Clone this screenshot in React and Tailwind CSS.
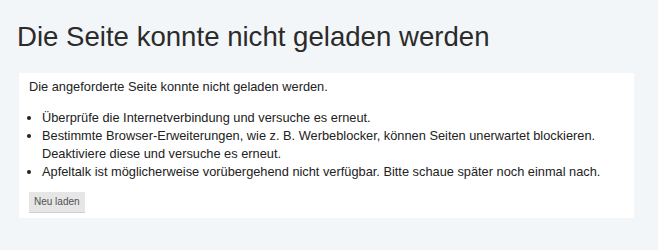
import React from 'react';

const tips = [
  'Überprüfe die Internetverbindung und versuche es erneut.',
  'Bestimmte Browser-Erweiterungen, wie z. B. Werbeblocker, können Seiten unerwartet blockieren. Deaktiviere diese und versuche es erneut.',
  'Apfeltalk ist möglicherweise vorübergehend nicht verfügbar. Bitte schaue später noch einmal nach.',
];

const App = () => {
  return (
    <div className="min-h-[250px] bg-[#f3f6f8] px-[19px] pt-[19px] pb-8 font-['Liberation_Sans',Arial,sans-serif] text-[#222]">
      <h1 className="-ml-[2px] text-[27.6px] leading-[36px] font-normal text-[#2b2b2b]">
        Die Seite konnte nicht geladen werden
      </h1>
      <div className="mt-[18px] w-[615px] bg-white px-[10px] pt-[5px] pb-[5px] text-[12.8px] leading-[18px]">
        <p>Die angeforderte Seite konnte nicht geladen werden.</p>
        <ul className="mt-[13px] list-disc pl-[13px]">
          {tips.map((tip) => (
            <li key={tip}>{tip}</li>
          ))}
        </ul>
        <button className="mt-[11px] block h-[21px] border-b border-[#cfcfcf] bg-[#e6e6e6] px-[5px] text-[10px] leading-[20px] text-[#505050]">
          Neu laden
        </button>
      </div>
    </div>
  );
};

export default App;
